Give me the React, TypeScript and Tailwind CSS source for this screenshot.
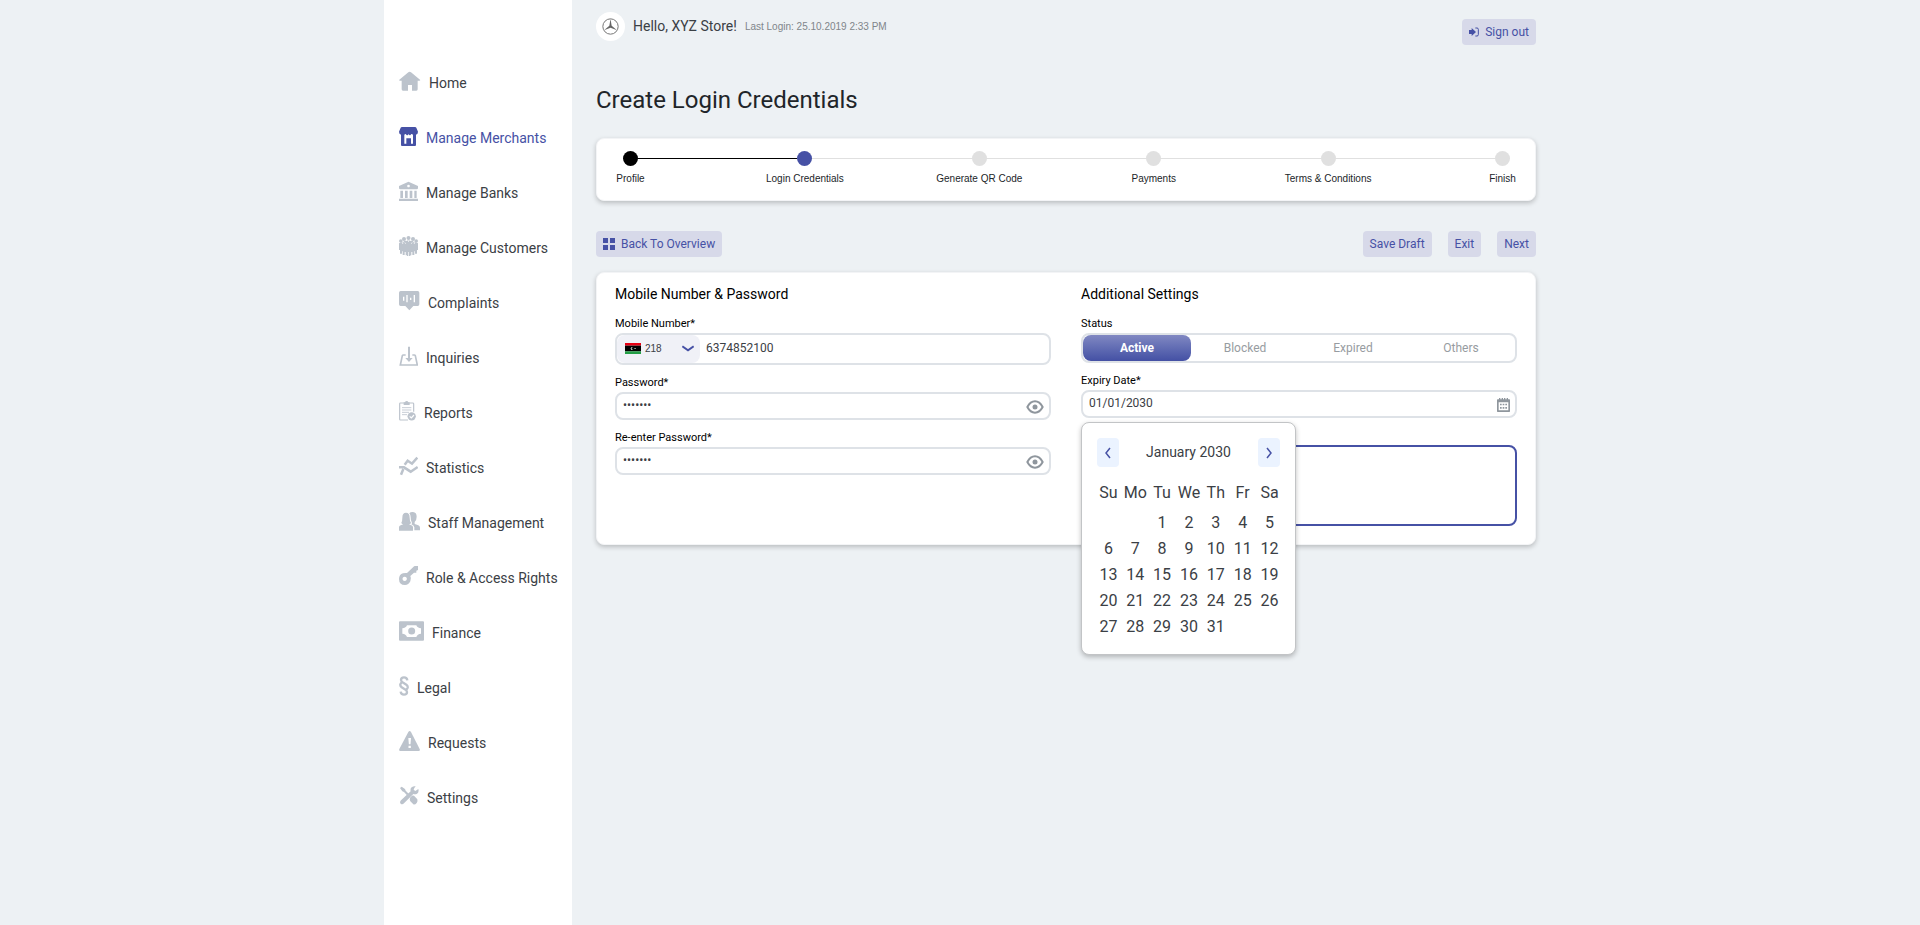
import { useState } from "react";
import type { ReactNode } from "react";

function Glyph({ width, children }: { width: number; children: ReactNode }) {
  return (
    <svg width={width} height={20} viewBox={`0 0 ${width * 3} 60`} fill="currentColor" className="shrink-0" aria-hidden="true">
      {children}
    </svg>
  );
}

const HomeIcon = () => (
  <Glyph width={22}>
    <path d="M32 2Q34 2 36 4L63 26Q65 29 61 29H56V55Q56 59 52 59H39V42H27V59H12Q8 59 8 55V29H3Q-1 29 1 26L28 4Q30 2 32 2Z" />
  </Glyph>
);

const StoreIcon = () => (
  <Glyph width={19}>
    <path d="M9 3H48Q51 3 52 5L57 17Q57 24 51 26V57Q51 60 48 60H9Q6 60 6 57V26Q0 24 0 17L5 5Q6 3 9 3Z" />
    <path fill="#fff" d="M16 26Q20 22 22 26 26 30 29 24 32 30 35 26 37 22 42 26V53H36V37H22V53H16Z" />
  </Glyph>
);

const BankIcon = () => (
  <Glyph width={19}>
    <path d="M28.500 2 57 15V21Q57 25 53 25H4Q0 25 0 21V15ZM28.500 11A4 4 0 1 0 28.600 11Z" fillRule="evenodd" />
    <path d="M4 29H12V51H4ZM18 29H26V51H18ZM32 29H40V51H32ZM46 29H53V51H46ZM0 53H57V60H0Z" />
  </Glyph>
);

const CrowdIcon = () => (
  <Glyph width={19}>
    <circle cx="28.500" cy="6" r="6" />
    <circle cx="15" cy="9" r="6" />
    <circle cx="42" cy="9" r="6" />
    <circle cx="5.500" cy="15" r="5.500" />
    <circle cx="51.500" cy="15" r="5.500" />
    <path d="M0 22Q8 17 12 20 14 13 22 15 28 10 35 15 43 13 45 20 50 17 57 22V42H54V53H48V46H46V57H40V48H37V58H34V60H24V58H20V48H17V57H11V46H9V53H3V42H0Z" />
    <path d="M17 20 21 23M40 20 36 23M28.500 13V18M10 21 12 24M47 21 45 24" stroke="#fff" strokeWidth="2" />
    <path d="M28.500 48V60" stroke="#fff" strokeWidth="2" />
  </Glyph>
);

const ComplaintIcon = () => (
  <Glyph width={21}>
    <path d="M5 0H56Q61 0 61 5V40Q61 45 56 45H43L31 58 19 45H5Q0 45 0 40V5Q0 0 5 0Z" />
    <path d="M14 17V29M24 12V34M35 20V27M46 12V34" stroke="#fff" strokeWidth="4" />
  </Glyph>
);

const InboxIcon = () => (
  <Glyph width={19}>
    <path d="M20 27H13Q11 27 10 29L4 57H55L49 29Q48 27 46 27H40" fill="none" stroke="currentColor" strokeWidth="5" />
    <path d="M27 2H33V36H41L30 48 19 36H27Z" />
  </Glyph>
);

const ReportIcon = () => (
  <Glyph width={17}>
    <path d="M27 57H4Q2 57 2 55V8Q2 6 4 6H41Q44 6 44 8V32" fill="none" stroke="currentColor" strokeWidth="3.500" />
    <path d="M14 4H18Q19 0 23 0 27 0 28 4H32V12H14Z" />
    <path d="M9 20H37M9 27H37M9 34H30M9 41H24" stroke="currentColor" strokeWidth="2.500" />
    <circle cx="38" cy="46" r="12.500" />
    <path d="M32 46 37 51 45 42" fill="none" stroke="#fff" strokeWidth="3.500" />
  </Glyph>
);

const StatsIcon = () => (
  <Glyph width={19}>
    <g fill="none" stroke="currentColor" strokeWidth="7.500">
      <path d="M17 26 26 14 39 23 55 5" />
      <path d="M0 34H15L35 47 56 33M6 56 13 39" />
    </g>
  </Glyph>
);

const StaffIcon = () => (
  <Glyph width={21}>
    <path d="M0 59V49Q0 45 5 43L13 40Q7 38 7 35 10 31 10 20 10 5 21 5 32 5 32 20 32 31 36 35 36 38 30 40L37 43Q42 45 42 49V59Z" />
    <path d="M31 7Q35 2 42 3 53 4 53 17 53 27 47 33V39L58 43Q63 45 63 50V58H46V49Q45 43 37 40 41 37 38 33 35 29 35 19 35 11 31 7Z" />
  </Glyph>
);

const KeyIcon = () => (
  <Glyph width={19}>
    <path fillRule="evenodd" d="M48 0H57V12L52 14V20H45L34 30Q38 37 34 46 29 57 18 57 0 57 0 39 0 26 12 22 18 20 24 21L43 3Q45 0 48 0ZM17 32A6.500 6.500 0 1 0 17.100 32Z" />
  </Glyph>
);

const FinanceIcon = () => (
  <Glyph width={25}>
    <path fillRule="evenodd" d="M3 1H72Q75 1 75 4V56Q75 59 72 59H3Q0 59 0 56V4Q0 1 3 1ZM24 13Q21 21 10 22V38Q21 39 24 48H52Q55 39 66 38V22Q55 21 52 13Z" />
    <circle cx="38" cy="30" r="10.500" />
  </Glyph>
);

const LegalIcon = () => (
  <Glyph width={10}>
    <g fill="none" stroke="currentColor" strokeWidth="7">
      <path d="M25 13Q24 4 15 4 6 4 6 12 6 17 14 21L22 26Q27 30 26 35 25 39 20 40" />
      <path d="M5 47Q6 56 15 56 24 56 24 48 24 43 16 39L8 34Q3 30 4 25 5 21 10 20" />
    </g>
  </Glyph>
);

const WarningIcon = () => (
  <Glyph width={21}>
    <path d="M32 0Q34 0 36 3L62 54Q64 60 59 60H4Q-1 60 1 54L28 3Q30 0 32 0Z" />
    <path d="M28 21H36L34.500 40H29.500ZM28.500 44H35.500V51H28.500Z" fill="#fff" />
  </Glyph>
);

const ToolsIcon = () => (
  <Glyph width={20}>
    <path d="M3 6 8 2 18 9 20 14 29 23 24 28 15 18 10 16Z" />
    <path d="M33 35 39 29Q45 28 48 32L55 40Q57 46 53 51 48 57 43 55L34 46Q31 41 33 35Z" />
    <path d="M50 1Q45 7 44 11L49 15 58 9Q61 20 53 24 48 26 43 24L15 52Q10 57 5 53 1 48 6 43L35 16Q33 8 38 4 43 0 50 1Z" />
  </Glyph>
);

const NAV: { label: string; icon: ReactNode; active?: boolean }[] = [
  { label: "Home", icon: <HomeIcon /> },
  { label: "Manage Merchants", icon: <StoreIcon />, active: true },
  { label: "Manage Banks", icon: <BankIcon /> },
  { label: "Manage Customers", icon: <CrowdIcon /> },
  { label: "Complaints", icon: <ComplaintIcon /> },
  { label: "Inquiries", icon: <InboxIcon /> },
  { label: "Reports", icon: <ReportIcon /> },
  { label: "Statistics", icon: <StatsIcon /> },
  { label: "Staff Management", icon: <StaffIcon /> },
  { label: "Role & Access Rights", icon: <KeyIcon /> },
  { label: "Finance", icon: <FinanceIcon /> },
  { label: "Legal", icon: <LegalIcon /> },
  { label: "Requests", icon: <WarningIcon /> },
  { label: "Settings", icon: <ToolsIcon /> },
];

function Sidebar() {
  return (
    <nav className="w-[188px] shrink-0 bg-white pt-[69px] pb-8" aria-label="Main">
      <ul className="flex flex-col gap-[31px] pl-[15px]">
        {NAV.map(({ label, icon, active }) => (
          <li key={label}>
            <a href="#" className="flex h-6 items-center gap-2 text-sm leading-5 whitespace-nowrap" aria-current={active ? "page" : undefined}>
              <span className={active ? "text-[#4651a5]" : "text-[#bcc3cc]"}>{icon}</span>
              <span className={active ? "pt-1 text-[#4651a5]" : "pt-1 text-[#3b4045]"}>{label}</span>
            </a>
          </li>
        ))}
      </ul>
    </nav>
  );
}

function SoftButton({ children }: { children: ReactNode }) {
  return (
    <button type="button" className="flex h-[26px] items-center gap-1.5 rounded bg-[#d7d9e9] px-[7px] text-xs whitespace-nowrap text-[#4651a5]">
      {children}
    </button>
  );
}

const STEPS = ["Profile", "Login Credentials", "Generate QR Code", "Payments", "Terms & Conditions", "Finish"];
const CARD = "rounded-lg border border-[#f3f4f6] bg-white shadow-[0_2px_5px_rgba(0,0,0,0.22)]";
const SMALL = "font-['Liberation_Sans',Arial,sans-serif] text-[10px]";

function Stepper({ current }: { current: number }) {
  return (
    <ol className={`mt-[22px] flex h-[63px] pr-[25px] pl-[26px] pt-3 ${CARD}`}>
      {STEPS.map((step, i) => (
        <li key={step} className={i === 0 ? "flex" : "flex flex-1"}>
          {i > 0 && <span className={i <= current ? "mt-[7px] h-px flex-1 bg-black" : "mt-[7px] h-px flex-1 bg-[#e0e0e0]"} />}
          <span className="flex w-[15px] flex-col items-center gap-[5px]">
            <span
              className={
                i < current
                  ? "size-[15px] rounded-full bg-black"
                  : i === current
                    ? "size-[15px] rounded-full bg-[#4651a5]"
                    : "size-[15px] rounded-full bg-[#e0e0e0]"
              }
            />
            <span className={`leading-4 whitespace-nowrap text-[#212529] ${SMALL}`}>{step}</span>
          </span>
        </li>
      ))}
    </ol>
  );
}

const LABEL = "text-[11px] leading-[18px] text-black";
const BOX = "flex rounded-lg border-2 border-[#dee2e7] bg-white";

function EyeIcon() {
  return (
    <svg width="18" height="14" viewBox="0 0 54 42" fill="none" stroke="#8f969d" strokeWidth="6" aria-hidden="true">
      <path d="M4 21Q13 4 27 4T50 21Q41 38 27 38T4 21Z" strokeLinejoin="round" />
      <circle cx="27" cy="21" r="7.500" fill="#8f969d" stroke="none" />
    </svg>
  );
}

function PasswordField({ id, label }: { id: string; label: string }) {
  const [shown, setShown] = useState(false);
  return (
    <div className="flex flex-col">
      <label htmlFor={id} className={LABEL}>{label}</label>
      <div className={`h-7 pr-[5px] ${BOX}`}>
        <input id={id} type={shown ? "text" : "password"} defaultValue="abc1234" className="min-w-0 flex-1 bg-transparent px-1.5 pb-0.5 text-xs text-[#3b4045] outline-none" />
        <button type="button" aria-label="Show password" className="pt-px" onClick={() => setShown(!shown)}>
          <EyeIcon />
        </button>
      </div>
    </div>
  );
}

function LibyaFlag() {
  return (
    <svg width="16" height="11" viewBox="0 0 48 33" className="shrink-0" aria-hidden="true">
      <path fill="#e70013" d="M0 0H48V8H0Z" />
      <path d="M0 8H48V25H0Z" />
      <path fill="#239e46" d="M0 25H48V33H0Z" />
      <path fill="#fff" d="M25 13.500A4.500 4.500 0 1 0 25 19.500 3.500 3.500 0 1 1 25 13.500ZM26 16.500 32 15V18Z" />
    </svg>
  );
}

const WEEKDAYS = ["Su", "Mo", "Tu", "We", "Th", "Fr", "Sa"];
const WEEKS = Array.from({ length: 5 }, (_, w) =>
  Array.from({ length: 7 }, (_, d) => {
    const day = w * 7 + d - 1;
    return day > 0 && day < 32 ? day : null;
  }),
);

function Arrow({ d, label }: { d: string; label: string }) {
  return (
    <button type="button" aria-label={label} className="flex h-[29px] w-[22px] items-center justify-center rounded bg-[#ebf3ff]">
      <svg width="6" height="12" viewBox="0 0 6 12" fill="none" stroke="#4651a5" strokeWidth="1.500" aria-hidden="true">
        <path d={d} />
      </svg>
    </button>
  );
}

function Calendar({ onPick }: { onPick: (day: number) => void }) {
  return (
    <div className="absolute top-full left-0 z-10 mt-1 h-[233px] w-[215px] rounded-lg border border-[#c2c4c6] bg-white pt-[15px] pr-3 pl-[13px] text-[#3b4045] shadow-[0_2px_5px_rgba(0,0,0,0.25)]">
      <div className="flex items-center justify-between pr-[3px] pl-0.5">
        <Arrow label="Previous month" d="M5 1 1 6 5 11" />
        <span className="pb-0.5 text-sm">January 2030</span>
        <Arrow label="Next month" d="M1 1 5 6 1 11" />
      </div>
      <table className="mt-3 w-full table-fixed border-collapse text-center text-base">
        <thead>
          <tr className="h-[31px]">
            {WEEKDAYS.map((d) => (
              <th key={d} scope="col" className="p-0 pb-1 font-normal">{d}</th>
            ))}
          </tr>
        </thead>
        <tbody>
          {WEEKS.map((week, w) => (
            <tr key={w} className="h-[26px]">
              {week.map((day, d) => (
                <td key={d} className="p-0">
                  {day && <button type="button" className="w-full leading-6" onClick={() => onPick(day)}>{day}</button>}
                </td>
              ))}
            </tr>
          ))}
        </tbody>
      </table>
    </div>
  );
}

const STATUSES = ["Active", "Blocked", "Expired", "Others"];

export default function App() {
  const [status, setStatus] = useState("Active");
  const [date, setDate] = useState("01/01/2030");
  const [open, setOpen] = useState(true);

  return (
    <div className="min-h-screen bg-[#edf1f4] font-[Roboto,sans-serif]">
      <div className="mx-auto flex min-h-screen max-w-6xl gap-6">
        <Sidebar />
        <main className="min-w-0 flex-1 pt-3 pb-8">
          <header className="flex items-start justify-between">
            <div className="flex items-center gap-2">
              <span className="flex size-[29px] items-center justify-center rounded-full bg-white">
                <svg width="17" height="17" viewBox="0 0 51 51" aria-hidden="true">
                  <circle cx="25.500" cy="25.500" r="23" fill="none" stroke="#777" strokeWidth="3" />
                  <path fill="#666" d="M25.500 3 29 23 45 37 25.500 29 6 37 22 23Z" />
                </svg>
              </span>
              <span className="pb-0.5 text-sm text-[#3b4045]">Hello, XYZ Store!</span>
              <span className={`text-[#80858a] ${SMALL}`}>Last Login: 25.10.2019 2:33 PM</span>
            </div>
            <div className="pt-[7px]">
              <SoftButton>
                <svg width="10" height="10" viewBox="0 0 30 30" fill="#4651a5" aria-hidden="true">
                  <path d="M0 9H8V3L21 15 8 27V21H0Z" />
                  <path d="M19 3H24Q28 3 28 7V23Q28 27 24 27H19" fill="none" stroke="#4651a5" strokeWidth="3" />
                </svg>
                Sign out
              </SoftButton>
            </div>
          </header>

          <h1 className="mt-[39px] text-2xl leading-8 text-[#212529]">Create Login Credentials</h1>

          <Stepper current={1} />

          <div className="mt-[30px] flex items-center justify-between">
            <SoftButton>
              <svg width="12" height="12" viewBox="0 0 12 12" fill="#4651a5" aria-hidden="true">
                <path d="M0 0H5V5H0ZM7 0H12V5H7ZM0 7H5V12H0ZM7 7H12V12H7Z" />
              </svg>
              Back To Overview
            </SoftButton>
            <div className="flex gap-4">
              <SoftButton>Save Draft</SoftButton>
              <SoftButton>Exit</SoftButton>
              <SoftButton>Next</SoftButton>
            </div>
          </div>

          <form className={`mt-[15px] grid grid-cols-2 gap-[30px] px-[18px] pt-[11px] pb-[18px] ${CARD}`} onSubmit={(e) => e.preventDefault()}>
            <section>
              <h2 className="mb-[11px] text-sm leading-5 text-black">Mobile Number &amp; Password</h2>
              <div className="flex flex-col gap-[9px]">
                <div className="flex flex-col">
                  <label htmlFor="mobile" className={LABEL}>Mobile Number*</label>
                  <div className={`h-8 ${BOX}`}>
                    <div className="flex w-[83px] items-center rounded-lg bg-[#f0f1f7] pr-1.5 pb-px pl-2">
                      <LibyaFlag />
                      <select aria-label="Country code" className={`min-w-0 flex-1 appearance-none bg-transparent pl-1 text-[#3b4045] outline-none ${SMALL}`}>
                        <option>218</option>
                      </select>
                      <svg width="12" height="7" viewBox="0 0 36 21" fill="none" stroke="#4651a5" strokeWidth="6" aria-hidden="true">
                        <path d="M1 4 18 16 35 4" />
                      </svg>
                    </div>
                    <input id="mobile" type="tel" defaultValue="6374852100" className="min-w-0 flex-1 bg-transparent px-1.5 pb-0.5 text-xs text-[#3b4045] outline-none" />
                  </div>
                </div>
                <PasswordField id="password" label="Password*" />
                <PasswordField id="password-again" label="Re-enter Password*" />
              </div>
            </section>

            <section>
              <h2 className="mb-[11px] text-sm leading-5 text-black">Additional Settings</h2>
              <div className="flex flex-col gap-[9px]">
                <div role="radiogroup" aria-labelledby="status-label" className="flex flex-col">
                  <span id="status-label" className={LABEL}>Status</span>
                  <div className={`h-[30px] ${BOX}`}>
                    {STATUSES.map((s) => (
                      <label
                        key={s}
                        className={
                          s === status
                            ? "flex flex-1 items-center justify-center rounded-lg bg-linear-to-b from-[#8188c2] to-[#4450a4] pb-px text-xs font-bold text-white"
                            : "flex flex-1 items-center justify-center rounded-lg pb-px text-xs text-[#979ca1]"
                        }
                      >
                        <input type="radio" name="status" className="sr-only" checked={s === status} onChange={() => setStatus(s)} />
                        {s}
                      </label>
                    ))}
                  </div>
                </div>

                <div className="relative flex flex-col">
                  <label htmlFor="expiry" className={LABEL}>Expiry Date*</label>
                  <div className={`h-7 pr-[5px] ${BOX}`}>
                    <input id="expiry" type="text" value={date} onChange={(e) => setDate(e.target.value)} className="min-w-0 flex-1 bg-transparent px-1.5 pb-0.5 text-xs text-[#3b4045] outline-none" />
                    <button type="button" aria-label="Open calendar" className="pt-0.5" onClick={() => setOpen(!open)}>
                      <svg width="13" height="14" viewBox="0 0 39 42" aria-hidden="true">
                        <path fill="#8f969d" fillRule="evenodd" d="M2 4H6V0H10V4H14V0H18V4H21V0H25V4H29V0H33V4H37Q39 4 39 6V40Q39 42 37 42H2Q0 42 0 40V6Q0 4 2 4ZM5 13V37H34V13Z" />
                        <path fill="#8f969d" d="M9 17H14V22H9ZM17 17H22V22H17ZM25 17H30V22H25ZM9 27H14V32H9ZM17 27H22V32H17ZM25 27H30V32H25Z" />
                      </svg>
                    </button>
                  </div>
                  {open && <Calendar onPick={(day) => setDate(`${String(day).padStart(2, "0")}/01/2030`)} />}
                </div>

                <textarea aria-label="Remarks" className="mt-[18px] block h-[81px] w-full resize-none rounded-lg border-2 border-[#4651a5] bg-white px-1.5 py-1 text-xs text-[#3b4045] outline-none" />
              </div>
            </section>
          </form>
        </main>
      </div>
    </div>
  );
}
